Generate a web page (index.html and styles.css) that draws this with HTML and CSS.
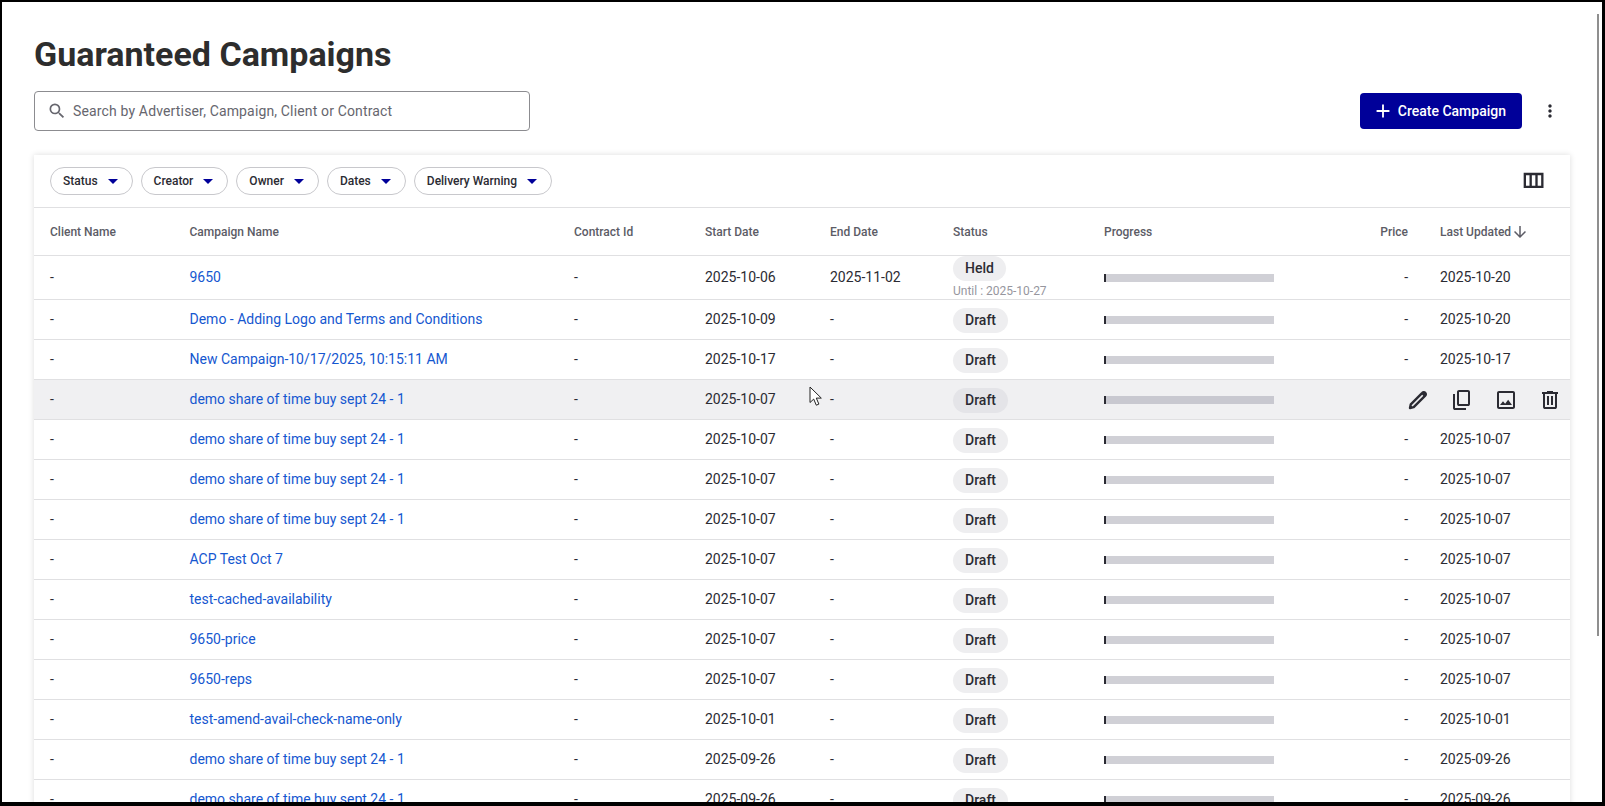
FILE: index.html
```html
<!DOCTYPE html>
<html lang="en">
<head>
<meta charset="utf-8">
<title>Guaranteed Campaigns</title>
<link rel="stylesheet" href="styles.css">
</head>
<body>
<div class="frame">
  <main class="page">
    <h1 class="title">Guaranteed Campaigns</h1>
    <div class="toolbar">
      <label class="search">
        <svg class="search-icon" viewBox="0 0 24 24"><path d="M15.5 14h-.79l-.28-.27A6.47 6.47 0 0 0 16 9.5 6.5 6.5 0 1 0 9.5 16c1.61 0 3.09-.59 4.23-1.57l.27.28v.79l5 4.99L20.49 19l-4.99-5zm-6 0C7.01 14 5 11.99 5 9.5S7.01 5 9.5 5 14 7.01 14 9.5 11.99 14 9.5 14z"/></svg>
        <span class="search-text">Search by Advertiser, Campaign, Client or Contract</span>
      </label>
      <div class="toolbar-actions">
        <button class="create-btn"><svg class="plus" viewBox="0 0 24 24"><path d="M19 13h-6v6h-2v-6H5v-2h6V5h2v6h6v2z"/></svg>Create Campaign</button>
        <span class="kebab"><svg viewBox="0 0 24 24"><path d="M12 8c1.1 0 2-.9 2-2s-.9-2-2-2-2 .9-2 2 .9 2 2 2zm0 2c-1.1 0-2 .9-2 2s.9 2 2 2 2-.9 2-2-.9-2-2-2zm0 6c-1.1 0-2 .9-2 2s.9 2 2 2 2-.9 2-2-.9-2-2-2z"/></svg></span>
      </div>
    </div>
    <section class="card">
      <div class="filters">
        <div class="chips">
          <span class="filter">Status<i class="caret"></i></span>
          <span class="filter">Creator<i class="caret"></i></span>
          <span class="filter">Owner<i class="caret"></i></span>
          <span class="filter">Dates<i class="caret"></i></span>
          <span class="filter">Delivery Warning<i class="caret"></i></span>
        </div>
        <svg class="columns-icon" viewBox="0 0 24 24"><path d="M4 5v13h17V5H4zm10 2v9h-3V7h3zM6 7h3v9H6V7zm13 9h-3V7h3v9z"/></svg>
      </div>
      <table class="grid">
        <colgroup>
          <col class="c-client"><col class="c-name"><col class="c-contract"><col class="c-start"><col class="c-end"><col class="c-status"><col class="c-progress"><col class="c-price"><col class="c-updated">
        </colgroup>
        <thead>
          <tr><th>Client Name</th><th>Campaign Name</th><th>Contract Id</th><th>Start Date</th><th>End Date</th><th>Status</th><th>Progress</th><th class="num">Price</th><th>Last Updated<svg class="sort" viewBox="0 0 24 24"><path d="M20 12l-1.41-1.41L13 16.17V4h-2v12.17l-5.58-5.59L4 12l8 8 8-8z"/></svg></th></tr>
        </thead>
        <tbody>
          <tr class="tall"><td>-</td><td><a>9650</a></td><td>-</td><td>2025-10-06</td><td>2025-11-02</td><td class="held-cell"><span class="pill">Held</span><div class="until">Until : 2025-10-27</div></td><td><div class="bar"></div></td><td class="num">-</td><td>2025-10-20</td></tr>
          <tr><td>-</td><td><a>Demo - Adding Logo and Terms and Conditions</a></td><td>-</td><td>2025-10-09</td><td>-</td><td class="pill-cell"><span class="pill">Draft</span></td><td><div class="bar"></div></td><td class="num">-</td><td>2025-10-20</td></tr>
          <tr><td>-</td><td><a>New Campaign-10/17/2025, 10:15:11 AM</a></td><td>-</td><td>2025-10-17</td><td>-</td><td class="pill-cell"><span class="pill">Draft</span></td><td><div class="bar"></div></td><td class="num">-</td><td>2025-10-17</td></tr>
          <tr class="hover"><td>-</td><td><a>demo share of time buy sept 24 - 1</a></td><td>-</td><td>2025-10-07</td><td>-</td><td class="pill-cell"><span class="pill">Draft</span></td><td><div class="bar"></div></td><td colspan="2" class="actions-cell"><div class="actions">
            <svg viewBox="0 0 24 24"><path class="pencil-line" d="M4 20l.8-3.7L16.3 4.8a2 2 0 0 1 2.9 0 2 2 0 0 1 0 2.9L7.7 19.2Z"/><path d="M15.3 5.8l1.1-1.2a2.1 2.1 0 0 1 3 0 2.1 2.1 0 0 1 0 3l-1.2 1.1Z"/></svg>
            <svg viewBox="0 0 24 24"><path d="M9 18q-.825 0-1.412-.587Q7 16.825 7 16V4q0-.825.588-1.413Q8.175 2 9 2h9q.825 0 1.413.587Q20 3.175 20 4v12q0 .825-.587 1.413Q18.825 18 18 18Zm0-2h9V4H9v12Zm-4 6q-.825 0-1.413-.587Q3 20.825 3 20V6h2v14h11v2Z"/></svg>
            <svg viewBox="0 0 24 24"><path d="M19 5v14H5V5h14m0-2H5c-1.1 0-2 .9-2 2v14c0 1.1.9 2 2 2h14c1.1 0 2-.9 2-2V5c0-1.1-.9-2-2-2zm-4.86 8.86l-3 3.87L9 13.14 6 17h12l-3.86-5.14z"/></svg>
            <svg viewBox="0 0 24 24"><path d="M7 21q-.825 0-1.412-.587Q5 19.825 5 19V6H4V4h5V3h6v1h5v2h-1v13q0 .825-.587 1.413Q17.825 21 17 21ZM17 6H7v13h10ZM9 17h2V8H9Zm4 0h2V8h-2Z"/></svg>
          </div></td></tr>
          <tr><td>-</td><td><a>demo share of time buy sept 24 - 1</a></td><td>-</td><td>2025-10-07</td><td>-</td><td class="pill-cell"><span class="pill">Draft</span></td><td><div class="bar"></div></td><td class="num">-</td><td>2025-10-07</td></tr>
          <tr><td>-</td><td><a>demo share of time buy sept 24 - 1</a></td><td>-</td><td>2025-10-07</td><td>-</td><td class="pill-cell"><span class="pill">Draft</span></td><td><div class="bar"></div></td><td class="num">-</td><td>2025-10-07</td></tr>
          <tr><td>-</td><td><a>demo share of time buy sept 24 - 1</a></td><td>-</td><td>2025-10-07</td><td>-</td><td class="pill-cell"><span class="pill">Draft</span></td><td><div class="bar"></div></td><td class="num">-</td><td>2025-10-07</td></tr>
          <tr><td>-</td><td><a>ACP Test Oct 7</a></td><td>-</td><td>2025-10-07</td><td>-</td><td class="pill-cell"><span class="pill">Draft</span></td><td><div class="bar"></div></td><td class="num">-</td><td>2025-10-07</td></tr>
          <tr><td>-</td><td><a>test-cached-availability</a></td><td>-</td><td>2025-10-07</td><td>-</td><td class="pill-cell"><span class="pill">Draft</span></td><td><div class="bar"></div></td><td class="num">-</td><td>2025-10-07</td></tr>
          <tr><td>-</td><td><a>9650-price</a></td><td>-</td><td>2025-10-07</td><td>-</td><td class="pill-cell"><span class="pill">Draft</span></td><td><div class="bar"></div></td><td class="num">-</td><td>2025-10-07</td></tr>
          <tr><td>-</td><td><a>9650-reps</a></td><td>-</td><td>2025-10-07</td><td>-</td><td class="pill-cell"><span class="pill">Draft</span></td><td><div class="bar"></div></td><td class="num">-</td><td>2025-10-07</td></tr>
          <tr><td>-</td><td><a>test-amend-avail-check-name-only</a></td><td>-</td><td>2025-10-01</td><td>-</td><td class="pill-cell"><span class="pill">Draft</span></td><td><div class="bar"></div></td><td class="num">-</td><td>2025-10-01</td></tr>
          <tr><td>-</td><td><a>demo share of time buy sept 24 - 1</a></td><td>-</td><td>2025-09-26</td><td>-</td><td class="pill-cell"><span class="pill">Draft</span></td><td><div class="bar"></div></td><td class="num">-</td><td>2025-09-26</td></tr>
          <tr><td>-</td><td><a>demo share of time buy sept 24 - 1</a></td><td>-</td><td>2025-09-26</td><td>-</td><td class="pill-cell"><span class="pill">Draft</span></td><td><div class="bar"></div></td><td class="num">-</td><td>2025-09-26</td></tr>
        </tbody>
      </table>
    </section>
  </main>
  <div class="scrollbar"></div>
  <svg class="cursor" viewBox="0 0 14 21"><path d="M1 1v15.5l3.7-3.4 2.6 6.1 2.6-1.1-2.6-6h5L1 1z"/></svg>
</div>
</body>
</html>
```

FILE: styles.css
```css
* { box-sizing: border-box; }
html, body { margin: 0; padding: 0; background: #fff; }
body { font-family: Roboto, "Liberation Sans", sans-serif; color: #2b2b33; font-size: 14px; }

.frame {
  position: relative;
  width: 1605px;
  height: 806px;
  overflow: hidden;
  border-style: solid;
  border-color: #000;
  border-width: 2px 3px 4px 2px;
  background: #fff;
}
.page { padding: 32px 32px 0; }
.title { margin: 0; font-size: 34px; line-height: 40px; font-weight: 700; color: #2d2d2d; }

.toolbar { display: flex; justify-content: space-between; align-items: center; margin-top: 17px; }
.search {
  display: flex; align-items: center; gap: 6px;
  width: 496px; height: 40px; padding-left: 12px;
  border: 1px solid #8c8c90; border-radius: 4px;
  color: #66666e; font-size: 14px; letter-spacing: .15px;
}
.search-icon { width: 20px; height: 20px; fill: #66666e; }
.toolbar-actions { display: flex; align-items: center; gap: 8px; }
.create-btn {
  display: flex; align-items: center; gap: 4px;
  height: 36px; padding: 0 16px 0 12px;
  border: 0; border-radius: 4px;
  background: #000099; color: #fff;
  font: 500 14px Roboto, sans-serif;
}
.plus { width: 22px; height: 22px; fill: #fff; }
.kebab { display: flex; width: 40px; height: 40px; align-items: center; justify-content: center; }
.kebab svg { width: 20px; height: 20px; fill: #2b2b33; }

.card { margin-top: 24px; background: #fff; box-shadow: 0 0 6px rgba(0,0,0,.14); }
.filters {
  display: flex; align-items: center; justify-content: space-between;
  padding: 12px 23px 12px 16px;
  border-bottom: 1px solid #e0e0e2;
}
.chips { display: flex; gap: 8px; }
.filter {
  display: flex; align-items: center; gap: 10px;
  height: 28px; padding: 0 14px 0 12px;
  border: 1px solid #c8c8cc; border-radius: 14px;
  font-size: 12px; font-weight: 500;
}
.caret { width: 0; height: 0; border-style: solid; border-width: 5px 5px 0; border-color: #000099 transparent transparent; }
.columns-icon { width: 28px; height: 28px; fill: #2b2b33; }

.grid { width: 100%; table-layout: fixed; border-collapse: separate; border-spacing: 0; }
.c-client { width: 139px; }
.c-name { width: 385px; }
.c-contract { width: 131px; }
.c-start { width: 125px; }
.c-end { width: 123px; }
.c-status { width: 151px; }
.c-progress { width: 202px; }
.c-price { width: 134px; }
.c-updated { width: 146px; }
.grid th, .grid td {
  padding: 0 0 0 16px;
  border-bottom: 1px solid #e0e0e2;
  text-align: left;
  white-space: nowrap;
  vertical-align: middle;
}
.grid th { height: 48px; font-size: 12px; font-weight: 500; color: #5c5c66; }
.grid td { height: 40px; line-height: 20px; padding-bottom: 2px; }
.grid th:nth-child(2), .grid td:nth-child(2) { padding-left: 16.5px; }
.grid .num { text-align: right; padding-right: 16px; }
.grid a { color: #1557d0; }
.sort { width: 18px; height: 18px; fill: #5c5c66; vertical-align: -5px; }

.tall td { height: 44px; }
.pill {
  display: inline-block; height: 25px; padding: 0 12px;
  border-radius: 13px; background: #eeeef0;
  font-weight: 500; line-height: 25px; vertical-align: middle;
}
.grid td.pill-cell { padding-top: 1px; padding-bottom: 0; line-height: 1; }
.grid td.held-cell { padding-top: 0; padding-bottom: 0; line-height: 1; }
.until { margin-top: 3px; font-size: 12px; line-height: 15px; color: #96969e; }
.bar { width: 170px; height: 8px; background: #d0d0d6; border-left: 2px solid #2b2b33; margin-top: 3px; }

.hover td { background: #f0f0f2; }
.hover .pill { background: #e4e4e8; }
.hover .bar { background: #c8c8d0; }
.actions { display: flex; justify-content: flex-end; gap: 20px; padding-right: 8px; margin-top: 2px; }
.actions svg { width: 24px; height: 24px; fill: #2b2b33; }
.actions .pencil-line { fill: none; stroke: #2b2b33; stroke-width: 2.4; stroke-linejoin: round; }
.grid .actions-cell { padding-left: 0; }

.scrollbar { position: absolute; left: 1595px; top: 12px; width: 2px; height: 622px; background: #8f8f8f; }
.cursor { position: absolute; left: 807px; top: 384px; width: 14px; height: 21px; fill: #fff; stroke: #222; stroke-width: 1; }
```
